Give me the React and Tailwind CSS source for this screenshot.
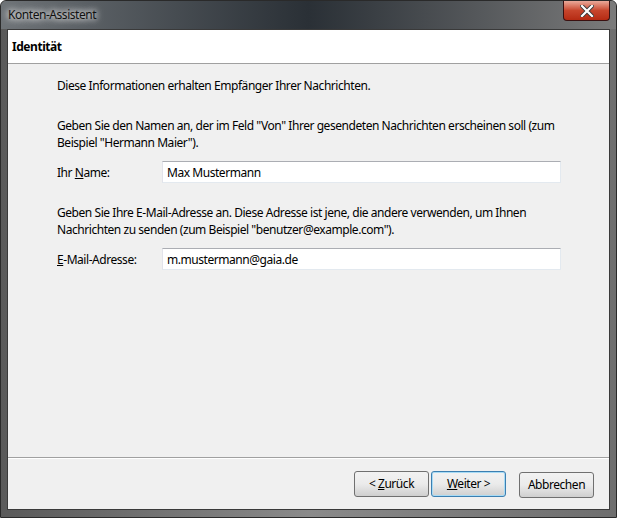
import React from 'react';

const font = { fontFamily: '"Noto Sans", "Open Sans", sans-serif' };

function Field({ label, mnemonic, rest, value }) {
  return (
    <div className="flex items-center h-[22px]">
      <label className="w-[105px] text-[12px] text-black">
        {label}<span className="underline">{mnemonic}</span>{rest}
      </label>
      <div className="w-[399px] h-[22px] bg-white border border-[#abadb3] border-r-[#e3e9ef] border-b-[#e3e9ef] border-l-[#e2e3ea] flex items-center px-[4px] text-[12px] text-black">
        {value}
      </div>
    </div>
  );
}

function Button({ children, focused }) {
  return (
    <button
      className={`h-[26px] w-[75px] rounded-[3px] text-[12px] text-black bg-gradient-to-b from-[#f2f2f2] via-[#ebebeb] to-[#cfcfcf] ${
        focused ? 'border border-[#3c7fb1] shadow-[inset_0_0_0_1px_#a8dbf5]' : 'border border-[#707070]'
      }`}
    >
      {children}
    </button>
  );
}

export default function App() {
  return (
    <div
      className="w-[617px] h-[518px] flex flex-col bg-gradient-to-r from-[#5a5a5a] via-[#8a8a8a] to-[#6e6e6e] rounded-t-[6px] border border-[#2a2a2a] overflow-hidden tracking-[-0.45px]"
      style={font}
    >
      {/* title bar */}
      <div className="h-[28px] flex items-start justify-between bg-gradient-to-r from-[#6f7478] via-[#2a3036] to-[#7b7b7b] relative">
        <div className="pl-[7px] pt-[5px] text-[12px] text-[#111] [text-shadow:0_0_6px_#fff,0_0_8px_#fff]">Konten-Assistent</div>
        <div className="mr-[6px] w-[47px] h-[20px] rounded-b-[4px] border border-[#3a1010] border-t-0 bg-gradient-to-b from-[#e9a99a] via-[#c7452c] to-[#b52a12] flex items-center justify-center">
          <svg width="14" height="12" viewBox="0 0 14 12">
            <path d="M2 1 L12 11 M12 1 L2 11" stroke="#3a3a3a" strokeWidth="4" strokeLinecap="square" />
            <path d="M2 1 L12 11 M12 1 L2 11" stroke="#fff" strokeWidth="2.2" strokeLinecap="square" />
          </svg>
        </div>
      </div>

      {/* client */}
      <div className="mx-[6px] flex-1 flex flex-col border border-[#3a3a3a] bg-[#f0f0f0]">
        <div className="h-[34px] bg-white border-b border-[#a0a0a0] flex items-center pl-[4px] text-[12px] font-bold text-black">
          Identität
        </div>
        <div className="flex-1 pl-[49px] pt-[13px] text-[12px] text-black leading-[17px]">
          <p>Diese Informationen erhalten Empfänger Ihrer Nachrichten.</p>
          <p className="mt-[23px] w-[512px]">
            Geben Sie den Namen an, der im Feld "Von" Ihrer gesendeten Nachrichten erscheinen soll (zum Beispiel "Hermann Maier").
          </p>
          <div className="mt-[10px]">
            <Field label="Ihr " mnemonic="N" rest="ame:" value="Max Mustermann" />
          </div>
          <p className="mt-[21px] w-[512px]">
            Geben Sie Ihre E-Mail-Adresse an. Diese Adresse ist jene, die andere verwenden, um Ihnen Nachrichten zu senden (zum Beispiel "benutzer@example.com").
          </p>
          <div className="mt-[10px]">
            <Field label="" mnemonic="E" rest="-Mail-Adresse:" value="m.mustermann@gaia.de" />
          </div>
        </div>
        <div className="h-[52px] border-t border-[#a0a0a0] shadow-[inset_0_1px_0_#fff] flex items-start justify-end pt-[13px] pr-[15px]">
          <div className="flex gap-[2px]">
            <Button>&lt; <span className="underline">Z</span>urück</Button>
            <Button focused><span className="underline">W</span>eiter &gt;</Button>
          </div>
          <div className="ml-[13px]">
            <Button>Abbrechen</Button>
          </div>
        </div>
      </div>
      <div className="h-[7px]" />
    </div>
  );
}
